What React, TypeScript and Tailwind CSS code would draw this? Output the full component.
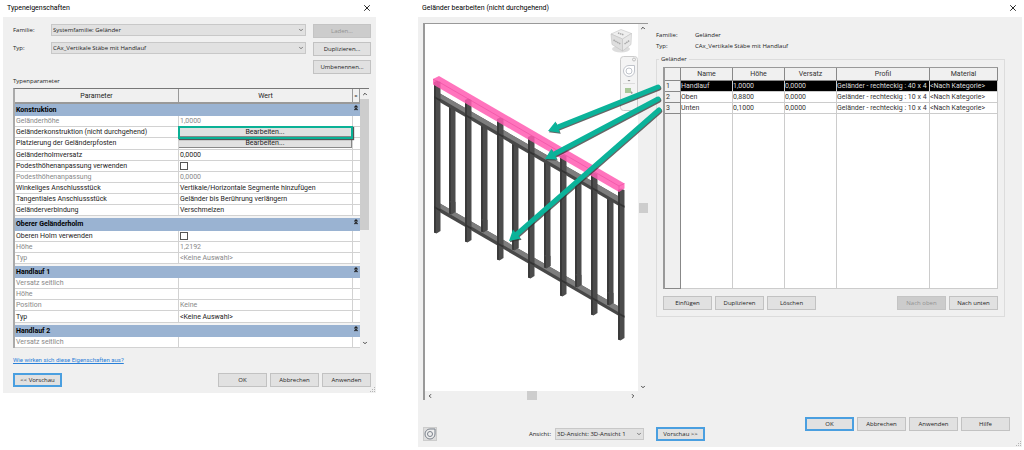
import type { ReactNode } from 'react';
import { ChevronDown, ChevronLeft, ChevronRight, ChevronUp, X } from 'lucide-react';

type Param = { name: string; value?: string; kind?: 'button' | 'check'; muted?: boolean; marked?: boolean };

const sections: { title: string; params: Param[] }[] = [
  {
    title: 'Konstruktion',
    params: [
      { name: 'Geländerhöhe', value: '1,0000', muted: true },
      { name: 'Geländerkonstruktion (nicht durchgehend)', value: 'Bearbeiten...', kind: 'button', marked: true },
      { name: 'Platzierung der Geländerpfosten', value: 'Bearbeiten...', kind: 'button' },
      { name: 'Geländerholmversatz', value: '0,0000' },
      { name: 'Podesthöhenanpassung verwenden', kind: 'check' },
      { name: 'Podesthöhenanpassung', value: '0,0000', muted: true },
      { name: 'Winkeliges Anschlussstück', value: 'Vertikale/Horizontale Segmente hinzufügen' },
      { name: 'Tangentiales Anschlussstück', value: 'Geländer bis Berührung verlängern' },
      { name: 'Geländerverbindung', value: 'Verschmelzen' },
    ],
  },
  {
    title: 'Oberer Geländerholm',
    params: [
      { name: 'Oberen Holm verwenden', kind: 'check' },
      { name: 'Höhe', value: '1,2192', muted: true },
      { name: 'Typ', value: '<Keine Auswahl>', muted: true },
    ],
  },
  {
    title: 'Handlauf 1',
    params: [
      { name: 'Versatz seitlich', muted: true },
      { name: 'Höhe', muted: true },
      { name: 'Position', value: 'Keine', muted: true },
      { name: 'Typ', value: '<Keine Auswahl>' },
    ],
  },
  { title: 'Handlauf 2', params: [{ name: 'Versatz seitlich', muted: true }] },
];

const rails = [
  ['Handlauf', '1,0000', '0,0000', 'Geländer - rechteckig : 40 x 4', '<Nach Kategorie>'],
  ['Oben', '0,8800', '0,0000', 'Geländer - rechteckig : 10 x 4', '<Nach Kategorie>'],
  ['Unten', '0,1000', '0,0000', 'Geländer - rechteckig : 10 x 4', '<Nach Kategorie>'],
];

// x, top and bottom of every upright
const posts = [
  [434, 82, 233],
  [465, 100, 242],
  [497, 119, 260],
  [528, 137, 278],
  [560, 156, 296],
  [591, 174, 315],
  [618, 190, 340],
];

const balusters = [
  [449, 107, 214],
  [481, 125, 232],
  [512, 143, 250],
  [544, 161, 268],
  [575, 179, 287],
  [607, 198, 305],
];

const arrows = [
  { from: [658, 87], to: [548, 131] },
  { from: [658, 99], to: [545, 159] },
  { from: [659, 110], to: [509, 241] },
];

function Button({ children, primary, disabled, className = 'w-[49px]' }: { children: ReactNode; primary?: boolean; disabled?: boolean; className?: string }) {
  const tone = primary
    ? 'border-2 border-[#4a9fe0] bg-[#e1e1e1]'
    : disabled
      ? 'border border-[#c4c4c4] bg-[#cccccc] text-[#929292]'
      : 'border border-[#c2c2c2] bg-[#e1e1e1]';
  return (
    <button type="button" disabled={disabled} className={`flex h-[14px] shrink-0 items-center justify-center whitespace-nowrap ${tone} ${className}`}>
      {children}
    </button>
  );
}

function Select({ id, value, className = '' }: { id: string; value: string; className?: string }) {
  return (
    <div className={`relative h-3 ${className}`}>
      <select id={id} className="block h-full w-full appearance-none border border-[#c8c8c8] bg-[#e1e1e1] pl-px leading-[10px]">
        <option>{value}</option>
      </select>
      <ChevronDown className="pointer-events-none absolute top-[3px] right-0.5 size-1.5 text-[#555]" strokeWidth={3} />
    </div>
  );
}

function TitleBar({ title }: { title: string }) {
  return (
    <header className="flex h-[17px] items-center justify-between pr-1 pb-px pl-1 font-[Roboto,sans-serif] text-[7px] text-black">
      <h2>{title}</h2>
      <button type="button" aria-label="Schließen">
        <X className="size-2.5" strokeWidth={2} />
      </button>
    </header>
  );
}

function Grip() {
  return (
    <svg viewBox="0 0 6 6" className="absolute right-0 bottom-0 size-1.5 fill-[#b5b5b5]">
      <path d="M4 0h1v1H4zM2 2h1v1H2zM4 2h1v1H4zM0 4h1v1H0zM2 4h1v1H2zM4 4h1v1H4z" />
    </svg>
  );
}

function ParamValue({ param }: { param: Param }) {
  if (param.kind === 'check') {
    return <input type="checkbox" aria-label={param.name} className="ml-px block size-2 appearance-none border border-[#555] bg-white" />;
  }
  if (param.kind === 'button') {
    return (
      <div className="relative">
        <button type="button" className="block h-2.5 w-full border-r border-b border-[#888] bg-[#e1e1e1] leading-[11px]">
          {param.value}
        </button>
        {param.marked && <div className="pointer-events-none absolute -inset-x-px -top-px -bottom-0.5 z-10 border-2 border-[#0bb196] shadow-[1px_1px_1px_#555]" />}
      </div>
    );
  }
  return <>{param.value}</>;
}

function TypeProperties() {
  return (
    <section className="min-w-0">
      <TitleBar title="Typeneigenschaften" />
      <div className="relative bg-[#f0f0f0] pt-[7px] pr-[5px] pb-1.5 pl-2.5">
        <div className="grid grid-cols-[38px_1fr_65px] gap-y-1">
          <label htmlFor="familie" className="leading-3">Familie:</label>
          <Select id="familie" value="Systemfamilie: Geländer" />
          <Button disabled className="ml-[7px]">Laden...</Button>
          <label htmlFor="typ" className="leading-3">Typ:</label>
          <Select id="typ" value="CAx_Vertikale Stäbe mit Handlauf" />
          <Button className="ml-[7px]">Duplizieren...</Button>
          <Button className="col-start-3 ml-[7px]">Umbenennen...</Button>
        </div>

        <h3 className="mt-0.5 leading-[10px]">Typenparameter</h3>
        <div className="mt-0.5 mr-0.5 flex h-[260px] border-t border-l-2 border-t-[#777] border-l-[#aaa] bg-white font-[Roboto,sans-serif] text-[7px] leading-[10px]">
          <table className="h-[259px] flex-1 table-fixed border-separate border-spacing-0">
            <colgroup>
              <col />
              <col className="w-[174px]" />
              <col className="w-[7px]" />
            </colgroup>
            <thead>
              <tr className="h-[15px] bg-[#f0f0f0]">
                <th className="border-r border-b-2 border-[#999] p-0 font-normal">Parameter</th>
                <th className="border-r border-b-2 border-[#999] p-0 font-normal">Wert</th>
                <th className="border-r border-b-2 border-[#999] p-0 text-[6px] font-normal">=</th>
              </tr>
            </thead>
            {sections.map((section, i) => (
              <tbody key={section.title}>
                {i > 0 && (
                  <tr className="h-0.5">
                    <td colSpan={3} className="h-0.5 bg-[#f4f4f4] p-0" />
                  </tr>
                )}
                <tr className="h-3 bg-[#9ab3d2] text-black">
                  <th colSpan={2} className="p-0 pl-px text-left font-bold">{section.title}</th>
                  <td className="p-0 align-top">
                    <svg viewBox="0 0 4 6" className="mt-px ml-px h-1.5 w-1 fill-none stroke-[#222]">
                      <path d="M.5 2.500 2 1l1.500 1.500M.5 5 2 3.500 3.500 5" strokeWidth="1.300" />
                    </svg>
                  </td>
                </tr>
                {section.params.map((param) => (
                  <tr key={param.name} className={`h-[11px] ${param.muted ? 'text-[#888]' : 'text-[#222]'}`}>
                    <td className="border-r border-b border-[#d2d2d2] p-0 pl-px whitespace-nowrap">{param.name}</td>
                    <td className={`border-r border-b border-[#d2d2d2] p-0 whitespace-nowrap ${param.kind ? '' : 'pl-px'}`}>
                      <ParamValue param={param} />
                    </td>
                    <td className="border-b border-[#d2d2d2] p-0" />
                  </tr>
                ))}
              </tbody>
            ))}
          </table>
          <div className="flex w-[9px] flex-col items-center bg-[#f0f0f0] text-[#444]">
            <ChevronUp className="my-0.5 size-1.5" strokeWidth={4} />
            <div className="h-[131px] w-full bg-[#cdcdcd]" />
            <ChevronDown className="mt-auto mb-0.5 size-1.5" strokeWidth={4} />
          </div>
        </div>

        <a href="#hilfe" className="mt-[7px] block w-fit font-[Roboto,sans-serif] leading-[10px] text-[#2a80d8] underline">
          Wie wirken sich diese Eigenschaften aus?
        </a>
        <footer className="mt-2 flex gap-[3px]">
          <Button primary>&lt;&lt; Vorschau</Button>
          <div className="flex-1" />
          <Button>OK</Button>
          <Button>Abbrechen</Button>
          <Button>Anwenden</Button>
        </footer>
        <Grip />
      </div>
    </section>
  );
}

function Upright({ x, top, bottom }: { x: number; top: number; bottom: number }) {
  return (
    <g>
      <path d={`M${x} ${top}l3-1.500 3.500 1.500V${bottom - 2}l-4 2.500-2.500-1z`} fill="#4c4c4c" />
      <path d={`M${x} ${top}l2 .5V${bottom}l-2-.5z`} fill="#3a3a3a" />
    </g>
  );
}

function Rail({ y }: { y: number }) {
  return (
    <g>
      <path d={`M436 ${y + 1}l4-2.500 184 106v4l-5 2.500-183-106z`} fill="#484848" />
      <path d={`M436 ${y + 1}l4-2.500 184 106v1.500l-4 2z`} fill="#7d7d7d" />
    </g>
  );
}

function RailingView() {
  return (
    <svg viewBox="425 24 213 367" className="block h-full w-full">
      {balusters.map(([x, top, bottom]) => (
        <Upright key={x} x={x} top={top} bottom={bottom} />
      ))}
      <Rail y={95} />
      <Rail y={205} />
      {/* balusters stand on the lower rail */}
      {balusters.map(([x, , bottom]) => (
        <Upright key={x} x={x} top={bottom - 12} bottom={bottom} />
      ))}
      {posts.map(([x, top, bottom]) => (
        <Upright key={x} x={x} top={top} bottom={bottom} />
      ))}
      {posts.map(([x]) => (
        <g key={x} fill="#333">
          <path d={`M${x} ${96 + (x - 434) * 0.577}l6.500 3.500v2l-6.500-3.500z`} />
          <path d={`M${x} ${206 + (x - 434) * 0.577}l6.500 3.500v2l-6.500-3.500z`} />
        </g>
      ))}
      {/* highlighted handrail */}
      <path d="M433 79l6-3 185.500 107.500v5L619 192 433 84.500z" fill="#ff5cb2" fillOpacity=".85" />
      <path d="M439 82l180 104M433 79l5 3v5M619 186l5.500-2.500M619 186v6" fill="none" stroke="#e8409a" strokeWidth=".5" />

      {/* view cube */}
      <ellipse cx="621" cy="49" rx="9" ry="3.500" fill="#ddd" />
      <g stroke="#bbb" strokeWidth=".5">
        <path d="M611 34l10-4.500 10.500 4-9 5.500z" fill="#efefef" />
        <path d="M611 34l11.500 5v12L612 44.500z" fill="#dedede" />
        <path d="M631.500 33.500l-9 5.500v12l8.500-6.500z" fill="#e8e8e8" />
      </g>
      <path d="M618 33l6 2M613.500 40l7 4M624.500 44l5-3.500" stroke="#aaa" strokeWidth="1.500" strokeDasharray="1.500 .6" />

      {/* navigation bar */}
      <rect x="620.500" y="56.500" width="17" height="54" rx="3" fill="#f4f4f4" stroke="#ccc" />
      <circle cx="634" cy="59.500" r="1.500" fill="none" stroke="#aaa" strokeWidth=".7" />
      <path d="M623.500 71a5.500 5.500 0 0 1 5.500-5.500h5.500v5.500a5.500 5.500 0 0 1-11 0z" fill="#fff" stroke="#c0c4cb" />
      <circle cx="629" cy="71" r="3" fill="none" stroke="#c0c4cb" />
      <path d="M627.500 80h3l-1.500 1.500z" fill="#888" />
      <path d="M623 83.500h12" stroke="#ddd" />
      <rect x="625" y="88" width="6" height="5" fill="#a8c898" />
      <path d="M631 91l2 2-2 1z" fill="#999" />
    </svg>
  );
}

function Arrows() {
  return (
    <svg viewBox="418 17 250 240" className="pointer-events-none absolute top-0 left-0 h-[240px] w-[250px]">
      {arrows.map(({ from: [x1, y1], to: [x2, y2] }) => {
        const length = Math.hypot(x1 - x2, y1 - y2);
        const angle = (Math.atan2(y1 - y2, x1 - x2) * 180) / Math.PI;
        const shape = `M0 0l10.500-6v3.500H${length}a2.500 2.500 0 0 1 0 5H10.500V6z`;
        return (
          <g key={y1}>
            <path d={shape} fill="#333" fillOpacity=".75" transform={`translate(${x2 + 0.8} ${y2 + 1.2}) rotate(${angle})`} />
            <path d={shape} fill="#0bb39a" transform={`translate(${x2} ${y2}) rotate(${angle})`} />
          </g>
        );
      })}
    </svg>
  );
}

function RailTable() {
  return (
    <table className="h-[222px] w-full table-fixed border-separate border-spacing-0 border-t border-l-2 border-[#999] bg-white font-[Roboto,sans-serif] text-[7px] leading-[10px] text-[#333]">
      <colgroup>
        <col className="w-4" />
        <col className="w-[52px]" />
        <col className="w-[52px]" />
        <col className="w-[52px]" />
        <col />
        <col className="w-[68px]" />
      </colgroup>
      <thead>
        <tr className="h-[13px] bg-[#f0f0f0]">
          {['', 'Name', 'Höhe', 'Versatz', 'Profil', 'Material'].map((head) => (
            <th key={head} className="border-r border-b border-[#888] p-0 font-normal">{head}</th>
          ))}
        </tr>
      </thead>
      <tbody>
        {rails.map((rail, i) => (
          <tr key={rail[0]} className="h-[11px]">
            <th className="border-r border-b border-[#888] bg-[#f0f0f0] p-0 pl-px text-left font-normal">{i + 1}</th>
            {rail.map((cell, j) => (
              <td key={j} className={`border-r border-b border-[#ccc] p-0 whitespace-nowrap ${i === 0 ? 'bg-black text-[#ddd]' : ''}`}>
                {cell}
              </td>
            ))}
          </tr>
        ))}
        <tr>
          <td className="border-r border-b border-[#888] bg-[#f0f0f0] p-0" />
          {[1, 2, 3, 4, 5].map((n) => (
            <td key={n} className="border-r border-b border-[#ccc] p-0" />
          ))}
        </tr>
      </tbody>
    </table>
  );
}

function EditRailing() {
  return (
    <section className="min-w-0">
      <TitleBar title="Geländer bearbeiten (nicht durchgehend)" />
      <div className="relative flex gap-2 bg-[#f0f0f0] pt-1.5 pr-3 pb-1.5 pl-[5px]">
        <div className="w-[225px] shrink-0">
          <div className="grid h-[377px] grid-cols-[1fr_10px] grid-rows-[1fr_9px] border-t border-l-2 border-[#999] text-[#444]">
            <div className="overflow-hidden bg-white">
              <RailingView />
            </div>
            <div className="flex flex-col items-center justify-between py-px">
              <ChevronUp className="size-1.5" strokeWidth={4} />
              <div className="h-2.5 w-[9px] bg-[#cdcdcd]" />
              <ChevronDown className="size-1.5" strokeWidth={4} />
            </div>
            <div className="flex items-center justify-between px-0.5">
              <ChevronLeft className="size-1.5" strokeWidth={4} />
              <div className="h-[9px] w-2.5 bg-[#cdcdcd]" />
              <ChevronRight className="size-1.5" strokeWidth={4} />
            </div>
          </div>
          <div className="mt-[27px] flex items-center pr-1">
            <button type="button" aria-label="Navigationsrad" className="flex size-[14px] items-center justify-center border border-[#ccc] bg-[#ddd]">
              <svg viewBox="0 0 12 12" className="size-3 fill-none stroke-[#7b828c]">
                <path d="M1 6a5 5 0 0 1 5-5h5v5A5 5 0 1 1 1 6z" fill="#eee" />
                <circle cx="6" cy="6" r="2.500" />
              </svg>
            </button>
            <label htmlFor="ansicht" className="ml-auto">Ansicht:</label>
            <Select id="ansicht" value="3D-Ansicht: 3D-Ansicht 1" className="ml-1 w-[89px]" />
          </div>
        </div>

        <div className="flex min-w-0 flex-1 flex-col">
          <dl className="mt-[7px] grid grid-cols-[39px_1fr] leading-[11px]">
            <dt>Familie:</dt>
            <dd>Geländer</dd>
            <dt>Typ:</dt>
            <dd>CAx_Vertikale Stäbe mit Handlauf</dd>
          </dl>
          <fieldset className="mt-[3px] mr-[5px] min-w-0 border border-[#dcdcdc] px-1.5 pt-1 pb-1.5">
            <legend className="-ml-1 px-0.5 leading-2">Geländer</legend>
            <RailTable />
            <div className="mt-[7px] flex gap-[3px]">
              <Button>Einfügen</Button>
              <Button>Duplizieren</Button>
              <Button>Löschen</Button>
              <div className="flex-1" />
              <Button disabled>Nach oben</Button>
              <Button>Nach unten</Button>
            </div>
          </fieldset>
          <footer className="mt-auto flex items-start gap-[3px]">
            <Button primary className="mt-2.5 w-[49px]">Vorschau &gt;&gt;</Button>
            <div className="flex-1" />
            <Button primary>OK</Button>
            <Button>Abbrechen</Button>
            <Button>Anwenden</Button>
            <Button>Hilfe</Button>
          </footer>
        </div>
        <Arrows />
        <Grip />
      </div>
    </section>
  );
}

export default function App() {
  return (
    <main className="grid min-h-screen grid-cols-[373fr_604fr] items-start gap-x-[42px] bg-white pr-0.5 pl-[3px] font-['Open_Sans','Noto_Sans',sans-serif] text-[6px] text-[#222]">
      <TypeProperties />
      <EditRailing />
    </main>
  );
}
